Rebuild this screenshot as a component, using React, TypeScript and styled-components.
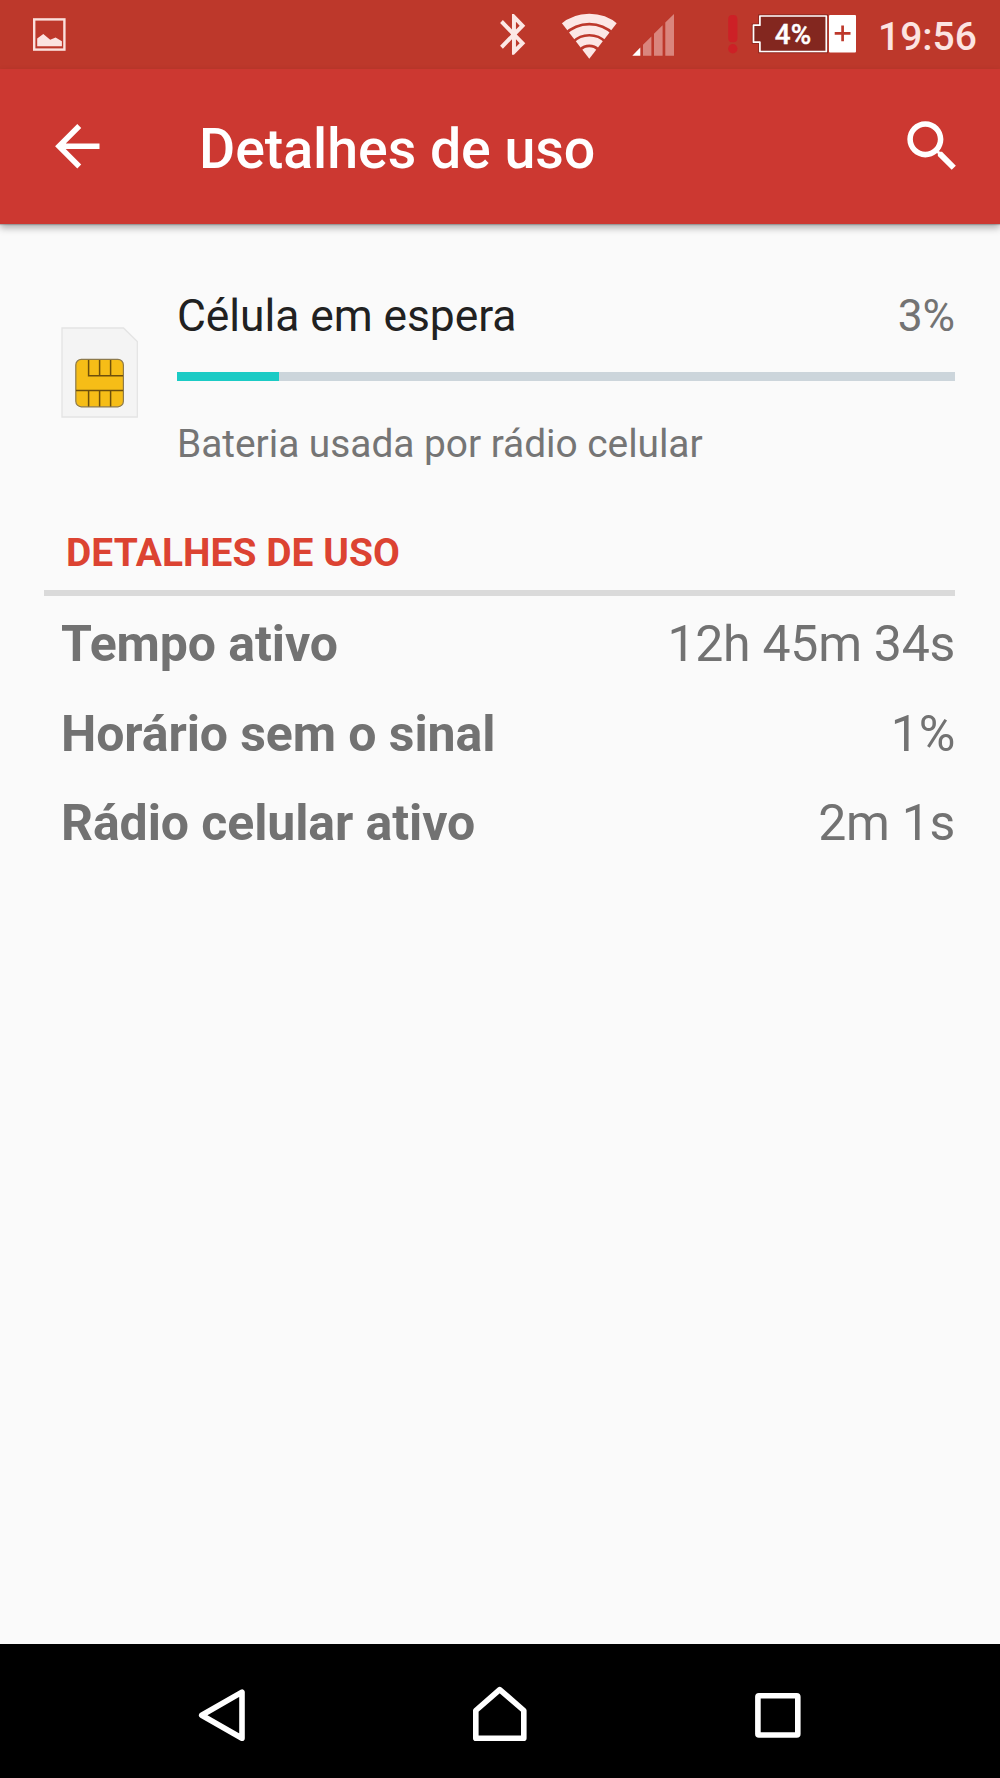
import React from 'react';
import styled, { createGlobalStyle } from 'styled-components';

const GlobalStyle = createGlobalStyle`
  * { box-sizing: border-box; }
  body { margin: 0; background: #fafafa; }
`;

const Screen = styled.div`
  display: flex;
  flex-direction: column;
  width: 1000px;
  height: 1778px;
  overflow: hidden;
  background: #fafafa;
  font-family: Roboto, 'Noto Sans', sans-serif;
`;

const StatusBar = styled.header`
  display: flex;
  flex: none;
  height: 69px;
  padding-left: 32px;
  background: #bd382b;
`;

const Spacer = styled.div`
  flex: 1;
`;

const StatusGroup = styled.div`
  display: flex;
  width: 502px;
`;

const StatusGlyph = styled.svg<{ $gap?: number }>`
  display: block;
  flex: none;
  height: 69px;
  margin-left: ${(p) => p.$gap ?? 0}px;
`;

const Clock = styled.time`
  margin-left: 20px;
  font-size: 39px;
  font-weight: 500;
  line-height: 74px;
  color: #fce4e2;
  white-space: nowrap;
`;

const AppBar = styled.div`
  display: flex;
  flex: none;
  align-items: center;
  height: 155px;
  padding: 0 34px 0 44px;
  background: #cc3831;
  box-shadow: 0 1px 1px rgba(0, 0, 0, 0.18), 0 4px 7px rgba(0, 0, 0, 0.3);
  z-index: 1;
`;

const IconButton = styled.button`
  flex: none;
  width: 67px;
  height: 67px;
  padding: 0;
  border: 0;
  background: none;
  color: #fff;

  svg {
    display: block;
    width: 66.6px;
    height: 66.6px;
    fill: currentColor;
  }
`;

const Title = styled.h1`
  flex: 1;
  margin: 6px 0 0 88px;
  font-size: 55.5px;
  font-weight: 500;
  line-height: 66px;
  letter-spacing: -0.06px;
  color: #fff;
`;

const Content = styled.main`
  flex: 1;
  padding: 62px 45px 0 44px;
`;

const Summary = styled.section`
  display: grid;
  grid-template-columns: 80px 1fr;
  column-gap: 36px;
  padding-left: 17px;
`;

const SimImage = styled.svg`
  width: 80px;
  height: 92px;
  margin-top: 40px;
`;

const SummaryHead = styled.div`
  display: flex;
  justify-content: space-between;
  padding-top: 1px;
  font-size: 44.4px;
  line-height: 58px;
  letter-spacing: -0.06px;
  color: #212121;
`;

const Percent = styled.span`
  color: #737373;
`;

const Track = styled.div`
  height: 9px;
  margin-top: 27px;
  background: #ccd5db;
`;

const Fill = styled.div`
  height: 9px;
  background: #1bcbc5;
`;

const Caption = styled.p`
  margin: 38px 0 0;
  font-size: 38.9px;
  line-height: 50px;
  letter-spacing: -0.04px;
  color: #757575;
`;

const SectionTitle = styled.h2`
  margin: 59px 0 0;
  padding-left: 22px;
  border-bottom: 6px solid #dadada;
  font-size: 38.9px;
  font-weight: 700;
  line-height: 50px;
  letter-spacing: 0.06px;
  height: 68px;
  color: #dc4332;
`;

const DetailRow = styled.div`
  display: flex;
  justify-content: space-between;
  height: 89.7px;
  padding: 18px 0 0 17px;
  font-size: 50px;
  line-height: 60px;
  color: #727272;
`;

const DetailLabel = styled.span`
  font-weight: 700;
  letter-spacing: -0.09px;
`;

const DetailValue = styled.span`
  letter-spacing: -0.28px;
`;

const NavBar = styled.nav`
  display: flex;
  flex: none;
  justify-content: center;
  gap: 212px;
  height: 134px;
  background: #000;

  svg {
    display: block;
    width: 66px;
    height: 134px;
    fill: none;
    stroke: #fff;
    stroke-width: 5.6;
    stroke-linejoin: round;
  }
`;

const usage = 13.1;

const details = [
  { label: 'Tempo ativo', value: '12h 45m 34s' },
  { label: 'Horário sem o sinal', value: '1%' },
  { label: 'Rádio celular ativo', value: '2m 1s' },
];

function StatusIcons() {
  return (
    <StatusGroup>
      <StatusGlyph width="30" viewBox="498 0 30 69" fill="#fce7e5">
        <path
          transform="translate(490.2 9.9) scale(1.98 2.04)"
          d="M17.71 7.71L12 2h-1v7.59L6.41 5 5 6.41 10.59 12 5 17.59 6.41 19 11 14.41V22h1l5.71-5.71-4.3-4.29 4.3-4.29zM13 5.83l1.88 1.88L13 9.59V5.83zm1.88 10.46L13 18.17v-3.76l1.88 1.88z"
        />
      </StatusGlyph>
      <StatusGlyph $gap={32} width="58" viewBox="560 0 58 69" fill="none" stroke="#fce7e5">
        <clipPath id="wedge">
          <path d="M589.3 58.8L554.9 14V0H623.7V14Z" />
        </clipPath>
        <g clipPath="url(#wedge)">
          <circle cx="589.3" cy="58.6" r="40.3" strokeWidth="8.9" />
          <circle cx="589.3" cy="58.6" r="28.9" strokeWidth="8.4" />
          <circle cx="589.3" cy="58.6" r="18.1" strokeWidth="8" />
          <circle cx="589.3" cy="58.6" r="5.7" strokeWidth="11.4" />
        </g>
      </StatusGlyph>
      <StatusGlyph $gap={12} width="46" viewBox="630 0 46 69" fill="#da857d">
        <path fill="#fff" d="M632.3 55.8L640.3 47.5V55.8Z" />
        <path d="M643 44.8L651.4 36.4V55.8H643ZM654 33.8L662.6 25.3V55.8H654ZM665.3 22.6L674 14V55.8H665.3Z" />
      </StatusGlyph>
      <StatusGlyph $gap={50} width="14" viewBox="726 0 14 69" fill="#cd2026">
        <rect x="728.2" y="15" width="9.2" height="27.3" rx="4" />
        <circle cx="732.8" cy="48.7" r="4.7" />
      </StatusGlyph>
      <StatusGlyph $gap={11} width="107" viewBox="751 0 107 69">
        <path
          d="M759.9 16H826.3V51.5H759.9V42.2H753.5V25.2H759.9Z"
          fill="#83271f"
          stroke="#8f2a21"
          strokeWidth="3.6"
        />
        <path
          d="M759.9 16H826.3V51.5H759.9V42.2H753.5V25.2H759.9Z"
          fill="#83271f"
          stroke="#fff"
          strokeWidth="1.7"
          strokeLinejoin="round"
        />
        <text
          x="793"
          y="43.8"
          textAnchor="middle"
          fontFamily="Roboto, sans-serif"
          fontWeight="500"
          fontSize="27.8"
          stroke="#fff"
          strokeWidth="0.4"
          fill="#fff"
        >
          4%
        </text>
        <rect x="829" y="15" width="27" height="37.5" rx="1" fill="#fff" />
        <path d="M834.7 33.4H850.5M842.6 25.4V41.3" stroke="#bd382b" strokeWidth="2.7" fill="none" />
      </StatusGlyph>
      <Clock>19:56</Clock>
    </StatusGroup>
  );
}

function SimCard() {
  return (
    <SimImage viewBox="61 326 80 92">
      <path d="M62 328H123.5L137.3 341.6V417H62Z" fill="#f4f4f4" stroke="#e4e4e4" strokeWidth="1.3" />
      <rect x="75.8" y="359.4" width="47.6" height="47.4" rx="5.5" fill="#f6bd17" stroke="#8d7a4c" strokeWidth="1.2" />
      <path
        d="M88.6 360V375.7H123M99.6 360V375.7M110.6 360V375.7M76 390.4H123M88.6 390.4V406.5M99.6 390.4V406.5M110.6 390.4V406.5"
        fill="none"
        stroke="#6d4f0c"
        strokeWidth="1.5"
      />
    </SimImage>
  );
}

export default function App() {
  return (
    <Screen>
      <GlobalStyle />
      <StatusBar>
        <StatusGlyph width="36" viewBox="32 0 36 69">
          <rect x="34.2" y="19.4" width="30.2" height="30.2" fill="none" stroke="#fbe0dd" strokeWidth="2.4" />
          <path d="M37.2 38.4L43.3 34L50.2 39.8L55.6 37.6L61.9 41.3V46.2H37.2Z" fill="#fbe3e1" />
        </StatusGlyph>
        <Spacer />
        <StatusIcons />
      </StatusBar>
      <AppBar>
        <IconButton aria-label="Voltar">
          <svg viewBox="0 0 24 24">
            <path d="M20 11H7.83l5.59-5.59L12 4l-8 8 8 8 1.41-1.41L7.83 13H20v-2z" />
          </svg>
        </IconButton>
        <Title>Detalhes de uso</Title>
        <IconButton aria-label="Pesquisar">
          <svg viewBox="0 0 24 24">
            <path d="M15.5 14h-.79l-.28-.27C15.41 12.59 16 11.11 16 9.5 16 5.91 13.09 3 9.5 3S3 5.91 3 9.5 5.91 16 9.5 16c1.61 0 3.09-.59 4.23-1.57l.27.28v.79l5 4.99L20.49 19l-4.99-5zm-6 0C7.01 14 5 11.99 5 9.5S7.01 5 9.5 5 14 7.01 14 9.5 11.99 14 9.5 14z" />
          </svg>
        </IconButton>
      </AppBar>
      <Content>
        <Summary>
          <SimCard />
          <div>
            <SummaryHead>
              <span>Célula em espera</span>
              <Percent>3%</Percent>
            </SummaryHead>
            <Track>
              <Fill style={{ width: `${usage}%` }} />
            </Track>
            <Caption>Bateria usada por rádio celular</Caption>
          </div>
        </Summary>
        <SectionTitle>DETALHES DE USO</SectionTitle>
        {details.map((d) => (
          <DetailRow key={d.label}>
            <DetailLabel>{d.label}</DetailLabel>
            <DetailValue>{d.value}</DetailValue>
          </DetailRow>
        ))}
      </Content>
      <NavBar>
        <svg viewBox="189 1644 66 134">
          <path d="M201.7 1715.2L242 1692.1V1738.3Z" />
        </svg>
        <svg viewBox="467 1644 66 134">
          <path d="M475.8 1710.5L499.7 1689.6L523.8 1710.5V1738.3H475.8Z" />
        </svg>
        <svg viewBox="745 1644 66 134">
          <rect x="757.9" y="1695.8" width="39.9" height="39.2" rx="1" />
        </svg>
      </NavBar>
    </Screen>
  );
}
